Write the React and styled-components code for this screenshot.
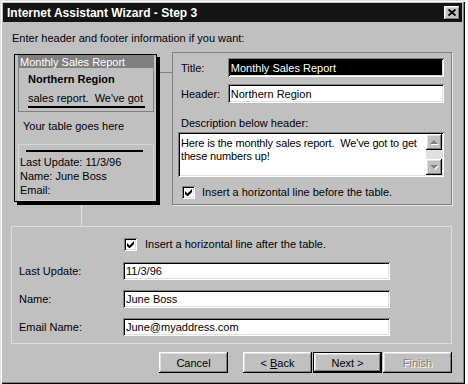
import styled, { createGlobalStyle } from "styled-components";

const GlobalStyle = createGlobalStyle`
  html, body {
    margin: 0;
    padding: 0;
    background: #fff;
  }
  body {
    font-family: "Liberation Sans", Arial, sans-serif;
  }
`;

const raised = `
  box-shadow: inset -1px -1px 0 #000, inset 1px 1px 0 #fff,
    inset -2px -2px 0 #808080, inset 2px 2px 0 #dfdfdf;
`;
const sunken = `
  box-shadow: inset 1px 1px 0 #808080, inset -1px -1px 0 #fff,
    inset 2px 2px 0 #000, inset -2px -2px 0 #dfdfdf;
`;

const Window = styled.div`
  width: 465px;
  height: 384px;
  box-sizing: border-box;
  background: #c0c0c0;
  box-shadow: inset 1px 1px 0 #dfdfdf, inset 2px 2px 0 #fff,
    inset -1px -1px 0 #000, inset -2px -2px 0 #808080;
  font-family: "Liberation Sans", Arial, sans-serif;
  font-size: 11px;
  color: #000;
  overflow: hidden;
  display: flex;
  flex-direction: column;
`;
const TitleBar = styled.div`
  margin: 3px 3px 0;
  height: 19px;
  background: #141414;
  color: #fff;
  font-size: 12px;
  font-weight: bold;
  display: flex;
  align-items: center;
  justify-content: space-between;
  padding: 0 2px 0 4px;
`;
const CloseButton = styled.div`
  width: 16px;
  height: 14px;
  background: #c0c0c0;
  ${raised}
  display: flex;
  align-items: center;
  justify-content: center;
`;
const Instruction = styled.div`
  margin: 9px 0 0 12px;
  line-height: 14px;
`;
const MiddleRow = styled.div`
  display: flex;
  align-items: flex-start;
  margin-top: 7px;
  padding-left: 14px;
`;
const Preview = styled.div`
  margin-top: 2px;
  width: 143px;
  height: 148px;
  box-sizing: border-box;
  border: 1px solid #000;
  box-shadow: 3px 3px 0 #000;
  padding: 0 2px 0 3px;
  font-size: 11px;
`;
const PageFrame = styled.div`
  height: 57px;
  box-sizing: border-box;
  border: 1px solid #808080;
`;
const PageCaption = styled.div`
  height: 12px;
  line-height: 12px;
  background: #808080;
  color: #fff;
  padding-left: 1px;
  white-space: nowrap;
`;
const PageHeading = styled.div`
  margin: 4px 0 0 9px;
  line-height: 14px;
  font-weight: bold;
`;
const PageDescription = styled.div`
  margin: 5px 0 0 9px;
  width: 117px;
  line-height: 14px;
  padding-bottom: 1px;
  border-bottom: 2px solid #000;
  white-space: pre;
  overflow: hidden;
`;
const TableNote = styled.div`
  margin: 7px 0 0 5px;
  line-height: 14px;
`;
const PageFooter = styled.div`
  margin-top: 11px;
  height: 57px;
  box-sizing: border-box;
  border: 1px solid #d6d6d6;
  padding-left: 1px;
`;
const Rule = styled.div`
  margin: 5px 10px 3px 6px;
  height: 2px;
  background: #000;
`;
const FooterLine = styled.div`
  line-height: 14px;
  white-space: nowrap;
`;
const GroupBox = styled.div`
  position: relative;
  box-sizing: border-box;
  border: 1px solid ${(p) => (p.$light ? "#dcdcdc" : "#808080")};
`;
const SettingsGroup = styled(GroupBox)`
  margin-left: 15px;
  width: 280px;
  height: 153px;
  padding: 5px 7px 0 8px;
  box-shadow: 1px 1px 0 #e8e8e8;
  &::before {
    content: "";
    position: absolute;
    left: -13px;
    top: 19px;
    width: 12px;
    height: 1px;
    background: #808080;
  }
`;
const FooterGroup = styled(GroupBox)`
  margin: 21px 0 0 11px;
  width: 441px;
  height: 118px;
  padding: 10px 0 0 7px;
  &::before {
    content: "";
    position: absolute;
    left: 69px;
    top: -22px;
    width: 1px;
    height: 21px;
    background: #e2e2e2;
  }
`;
const FieldRow = styled.div`
  display: flex;
  align-items: center;
  margin-top: ${(p) => p.$gap || 0}px;
`;
const Label = styled.div`
  width: ${(p) => p.$width}px;
  line-height: 14px;
  white-space: nowrap;
`;
const TextBox = styled.div`
  width: ${(p) => p.$width}px;
  height: ${(p) => p.$height || 18}px;
  box-sizing: border-box;
  background: ${(p) => (p.$selected ? "#000" : "#fff")};
  color: ${(p) => (p.$selected ? "#fff" : "#000")};
  ${sunken}
  padding: 0 3px 0 3px;
  display: flex;
  align-items: center;
  white-space: nowrap;
  overflow: hidden;
`;
const Caption = styled.div`
  margin-top: 13px;
  line-height: 14px;
`;
const TextArea = styled.div`
  margin: 2px 0 0 -3px;
  width: 266px;
  height: 45px;
  box-sizing: border-box;
  background: #fff;
  ${sunken}
  padding: 2px;
  display: flex;
`;
const AreaText = styled.div`
  flex: 1;
  padding: 3px 0 0 1px;
  line-height: 13px;
  letter-spacing: -0.15px;
  white-space: nowrap;
  overflow: hidden;
`;
const ScrollBar = styled.div`
  width: 16px;
  display: flex;
  flex-direction: column;
  background: #e0e0e0;
`;
const ScrollButton = styled.div`
  height: 16px;
  background: #c0c0c0;
  ${raised}
  display: flex;
  align-items: center;
  justify-content: center;
`;
const ScrollTrack = styled.div`
  flex: 1;
`;
const CheckRow = styled.label`
  display: flex;
  align-items: center;
  margin: ${(p) => p.$margin};
  line-height: 14px;
`;
const CheckBox = styled.span`
  width: 13px;
  height: 13px;
  box-sizing: border-box;
  background: #fff;
  ${sunken}
  display: flex;
  align-items: center;
  justify-content: center;
  margin-right: ${(p) => p.$space}px;
`;
const ButtonRow = styled.div`
  display: flex;
  justify-content: flex-end;
  margin-top: 8px;
  padding-right: 13px;
`;
const Button = styled.div`
  width: 69px;
  height: 21px;
  box-sizing: border-box;
  background: #c0c0c0;
  ${raised}
  ${(p) =>
    p.$default &&
    `
    border: 1px solid #000;
  `}
  display: flex;
  align-items: center;
  justify-content: center;
  margin-left: ${(p) => p.$gap || 0}px;
  color: ${(p) => (p.$disabled ? "#808080" : "#000")};
  text-shadow: ${(p) => (p.$disabled ? "1px 1px 0 #fff" : "none")};
  u {
    text-decoration: underline;
  }
`;

const Check = () => (
  <svg width="7" height="7" viewBox="0 0 7 7">
    <path d="M0 2v3l2 2h1l4-4V0L2.5 4.5z" fill="#000" />
  </svg>
);

const Arrow = ({ down }) => (
  <svg width="10" height="7" viewBox="0 0 10 7">
    <path d={down ? "M2 2h8L6 6z" : "M2 6h8L6 2z"} fill="#fff" />
    <path d={down ? "M1 1h8L5 5z" : "M1 5h8L5 1z"} fill="#808080" />
  </svg>
);

const App = () => {
  return (
    <>
      <GlobalStyle />
      <Window>
        <TitleBar>
          <span>Internet Assistant Wizard - Step 3</span>
          <CloseButton>
            <svg width="8" height="7" viewBox="0 0 8 7">
              <path
                d="M0.5 0.5L7.5 6.5M7.5 0.5L0.5 6.5"
                stroke="#000"
                strokeWidth="1.8"
              />
            </svg>
          </CloseButton>
        </TitleBar>
        <Instruction>Enter header and footer information if you want:</Instruction>
        <MiddleRow>
          <Preview>
            <PageFrame>
              <PageCaption>Monthly Sales Report</PageCaption>
              <PageHeading>Northern Region</PageHeading>
              <PageDescription>{"sales report.  We've got"}</PageDescription>
            </PageFrame>
            <TableNote>Your table goes here</TableNote>
            <PageFooter>
              <Rule />
              <FooterLine>Last Update: 11/3/96</FooterLine>
              <FooterLine>Name: June Boss</FooterLine>
              <FooterLine>Email:</FooterLine>
            </PageFooter>
          </Preview>
          <SettingsGroup>
            <FieldRow>
              <Label $width={47}>Title:</Label>
              <TextBox $width={217} $height={19} $selected>
                Monthly Sales Report
              </TextBox>
            </FieldRow>
            <FieldRow $gap={7}>
              <Label $width={47}>Header:</Label>
              <TextBox $width={217} $height={19}>
                Northern Region
              </TextBox>
            </FieldRow>
            <Caption>Description below header:</Caption>
            <TextArea>
              <AreaText>
                Here is the monthly sales report.&nbsp; We've got to get
                <br />
                these numbers up!
              </AreaText>
              <ScrollBar>
                <ScrollButton>
                  <Arrow />
                </ScrollButton>
                <ScrollTrack />
                <ScrollButton>
                  <Arrow down />
                </ScrollButton>
              </ScrollBar>
            </TextArea>
            <CheckRow $margin="8px 0 0 1px">
              <CheckBox $space={7}>
                <Check />
              </CheckBox>
              Insert a horizontal line before the table.
            </CheckRow>
          </SettingsGroup>
        </MiddleRow>
        <FooterGroup $light>
          <CheckRow $margin="0 0 0 105px">
            <CheckBox $space={8}>
              <Check />
            </CheckBox>
            Insert a horizontal line after the table.
          </CheckRow>
          <FieldRow $gap={11}>
            <Label $width={104}>Last Update:</Label>
            <TextBox $width={267}>11/3/96</TextBox>
          </FieldRow>
          <FieldRow $gap={10}>
            <Label $width={104}>Name:</Label>
            <TextBox $width={267}>June Boss</TextBox>
          </FieldRow>
          <FieldRow $gap={10}>
            <Label $width={104}>Email Name:</Label>
            <TextBox $width={267}>June@myaddress.com</TextBox>
          </FieldRow>
        </FooterGroup>
        <ButtonRow>
          <Button>Cancel</Button>
          <Button $gap={15}>
            &lt;&nbsp;<u>B</u>ack
          </Button>
          <Button $gap={1} $default>
            Next &gt;
          </Button>
          <Button $gap={1} $disabled>
            Finish
          </Button>
        </ButtonRow>
      </Window>
    </>
  );
};

export default App;
